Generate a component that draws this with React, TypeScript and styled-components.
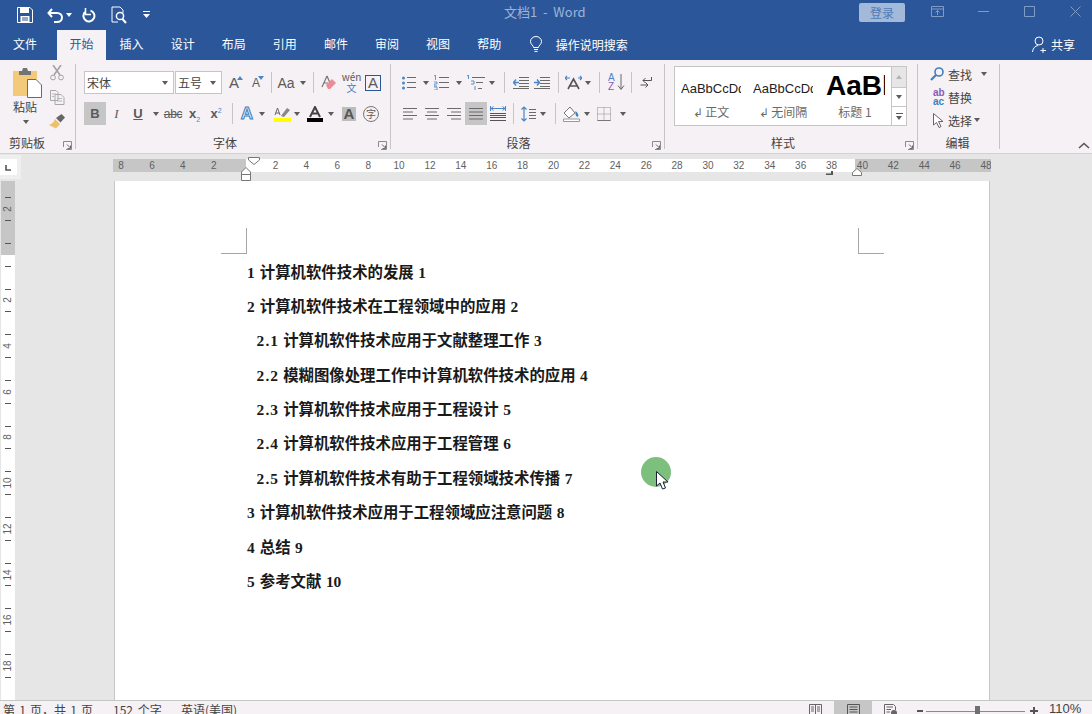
import React from 'react';
import styled, { createGlobalStyle } from 'styled-components';

const Global = createGlobalStyle`
  html, body { margin: 0; padding: 0; height: 100%; overflow: hidden; background: #e6e6e6; }
  #root { height: 100%; }
  * { box-sizing: border-box; }
`;
const UI = `"Noto Sans CJK SC", "Liberation Sans", sans-serif`;
const Latin = `"Liberation Sans", "Noto Sans CJK SC", sans-serif`;

const Shell = styled.div`
  position: relative; width: 1092px; height: 714px; overflow: hidden;
  display: flex; flex-direction: column; font-family: ${UI}; font-size: 12px; color: #444; background: #e6e6e6;
`;
const TitleBar = styled.header`
  height: 30px; flex: none; background: #2b579a; display: flex; align-items: center; position: relative;
`;
const Qat = styled.div`display: flex; align-items: center; padding-left: 15px;`;
const QatSlot = styled.span<{ $w: number }>`width: ${p => p.$w}px; flex: none; display: flex; justify-content: center; align-items: center;`;
const TitleText = styled.div`
  position: absolute; left: 504px; top: 3px; color: #9db4d6; font-size: 13px; line-height: 18px; white-space: pre; font-family: ${UI};
`;
const TitleRight = styled.div`margin-left: auto; margin-right: -6px; display: flex; align-items: center; height: 30px;`;
const Login = styled.button`
  width: 46px; height: 19px; margin: -6px 9px 0 0; border: 0; border-radius: 2px; background: #a2b9d9; color: #4f7bb3;
  font: 12px/19px ${UI}; padding: 0;
`;
const WinBtn = styled.span`width: 46px; height: 22px; margin-top: -8px; display: flex; align-items: center; justify-content: center;`;

const TabBar = styled.nav`height: 30px; flex: none; background: #2b579a; display: flex; align-items: stretch;`;
const Tab = styled.div<{ $active?: boolean; $w?: number; $mr?: number }>`
  width: ${p => p.$w ?? 51.1}px; margin-right: ${p => p.$mr ?? 0}px; display: flex; align-items: center; justify-content: center; padding-bottom: 3px;
  color: ${p => (p.$active ? '#2b579a' : '#fff')}; background: ${p => (p.$active ? '#f5f1f5' : 'transparent')};
`;
const Tell = styled.div`display: flex; align-items: center; color: #fff; padding: 0 0 1px 14px; gap: 13px;`;
const Share = styled.div`margin-left: auto; display: flex; align-items: center; color: #fff; gap: 4px; padding: 0 17px 1px 0;`;

const Ribbon = styled.section`height: 93px; flex: none; background: #f5f1f5; display: flex; position: relative;`;
const Group = styled.div<{ $w: number }>`
  width: ${p => p.$w}px; flex: none; position: relative; display: flex; flex-direction: column; margin-top: 4px; height: 85px;
  border-right: 1px solid #c6c6c6;
`;
const GroupBody = styled.div<{ $pl: number }>`
  padding: 7px 0 0 ${p => p.$pl}px; display: flex; flex-direction: column; gap: 8px;
`;
const GroupLabel = styled.div<{ $pr?: number; $left?: number }>`
  margin-top: auto; margin-bottom: -3px; height: 18px; line-height: 18px; color: #444;
  text-align: ${p => (p.$left ? 'left' : 'center')}; padding: 0 ${p => p.$pr ?? 0}px 0 ${p => p.$left ?? 0}px;
`;
const Launcher = styled.span`position: absolute; right: 3px; bottom: -1px; display: flex;`;
const Row = styled.div`display: flex; align-items: center; height: 23px;`;
const Slot = styled.span<{ $w?: number; $ml?: number; $on?: boolean }>`
  width: ${p => p.$w ?? 22}px; margin-left: ${p => p.$ml ?? 0}px; height: 23px; flex: none; display: flex; align-items: center; justify-content: center; position: relative;
  background: ${p => (p.$on ? '#c6c6c6' : 'transparent')};
`;
const Caret = styled.i`width: 0; height: 0; border-left: 3.5px solid transparent; border-right: 3.5px solid transparent; border-top: 4px solid #5c5c5c; display: block;`;
const Sep = styled.i`display: block; width: 1px; height: 21px; background: #c6c6c6;`;
const Combo = styled.div<{ $w: number; $mr?: number }>`
  width: ${p => p.$w}px; margin-right: ${p => p.$mr ?? 0}px; height: 23px; background: #fff; border: 1px solid #c6c6c6; display: flex; align-items: center; justify-content: space-between;
  padding: 0 5px 0 2px; font-size: 12px; color: #444;
`;
const Glyph = styled.span<{ $s?: number; $w?: number; $i?: boolean; $c?: string; $u?: boolean; $ff?: string }>`
  font-family: ${p => p.$ff ?? Latin}; font-size: ${p => p.$s ?? 13}px; font-weight: ${p => p.$w ?? 400}; font-style: ${p => (p.$i ? 'italic' : 'normal')};
  color: ${p => p.$c ?? '#5a5a5a'}; text-decoration: ${p => (p.$u ? 'underline' : 'none')}; line-height: 1; white-space: nowrap;
  sub, sup { font-size: 7px; color: #4a86c5; font-weight: 400; line-height: 0; }
`;
const Strike = styled(Glyph)`text-decoration: line-through; letter-spacing: -0.3px;`;
const WenStack = styled(Glyph)`display: flex; flex-direction: column; align-items: center; gap: 1px; line-height: 10px; font-size: 10px;`;
const WenHan = styled.span`color: #3f7fc0; font-size: 10px;`;
const BoxedA = styled(Glyph)`border: 1px solid #2b579a; width: 16px; height: 16px; display: flex; align-items: center; justify-content: center;`;
const OutlineA = styled(Glyph)`-webkit-text-stroke: 1px #3f7fc0; font-size: 17px;`;
const ShadedA = styled(Glyph)`background: #bdbdbd; width: 14px; height: 14px; display: flex; align-items: center; justify-content: center;`;
const CircledHan = styled(Glyph)`border: 1px solid #777; border-radius: 50%; width: 16px; height: 16px; display: flex; align-items: center; justify-content: center;`;
const GrowCaret = styled(Caret)<{ $up?: boolean }>`
  position: absolute; right: ${p => (p.$up ? 2 : 3)}px; top: 5px; border-top-color: #4a86c5; transform: ${p => (p.$up ? 'rotate(180deg)' : 'none')};
`;
const WhiteCaret = styled(Caret)`border-top-color: #fff;`;
const DisabledCaret = styled(Caret)`border-top-color: #b5b5b5; transform: rotate(180deg);`;
const MoreBar = styled.i`display: block; width: 7px; height: 1px; background: #5c5c5c;`;

const Clip = styled.div`display: flex; height: 66px;`;
const PasteCol = styled.div`width: 47px; padding: 3px 0 0 13px; display: flex; flex-direction: column;`;
const PasteLabel = styled.div`font-size: 12px; line-height: 16px; margin: 1px 0 0 0; color: #444;`;
const PasteCaret = styled.div`padding: 5px 0 0 10px;`;
const ClipCol = styled.div`width: 20px; display: flex; flex-direction: column; align-items: center; gap: 6px;`;
const ClipCell = styled.span`height: 18px; display: flex; align-items: center; justify-content: center;`;

const Gallery = styled.div`
  margin: 2px 0 0 9px; width: 233px; height: 60px; flex: none; border: 1px solid #c6c6c6; background: #fff; display: flex;
`;
const StyleItem = styled.div<{ $w: number }>`width: ${p => p.$w}px; padding-left: 6px; display: flex; flex-direction: column; flex: none;`;
const Sample = styled.div<{ $bold?: boolean }>`
  height: 38px; width: 60px; overflow: hidden; white-space: nowrap; display: flex; align-items: center;
  font-family: ${Latin}; font-size: ${p => (p.$bold ? 28 : 13)}px; font-weight: ${p => (p.$bold ? 700 : 400)}; color: ${p => (p.$bold ? '#000' : '#222')};
  padding: ${p => (p.$bold ? '0 0 0 1px' : '5px 0 0 0')};
`;
const SampleName = styled.div`text-align: center; width: 60px; font-size: 12px; line-height: 14px; color: #6a6a6a; white-space: pre;`;
const Scroll = styled.div`margin-left: auto; width: 15px; display: flex; flex-direction: column; border-left: 1px solid #c6c6c6;`;
const ScrollBtn = styled.div<{ $off?: boolean; $h: number }>`
  height: ${p => p.$h}px; display: flex; align-items: center; justify-content: center; flex-direction: column; gap: 2px;
  background: ${p => (p.$off ? '#e6e6e6' : '#fff')}; border-bottom: 1px solid #c6c6c6;
  &:last-child { border-bottom: 0; }
`;
const EditCol = styled.div`display: flex; flex-direction: column; gap: 3px; padding: 0 0 0 11px; height: 66px;`;
const EditRow = styled.div`display: flex; align-items: center; height: 20px; color: #444;`;
const EditIcon = styled.span<{ $pl: number }>`width: 18px; padding-left: ${p => p.$pl}px; display: flex;`;
const EditText = styled.span<{ $mr: number }>`margin-left: 1px; margin-right: ${p => p.$mr}px;`;
const AbStack = styled(Glyph)`display: flex; flex-direction: column; line-height: 9px; font-size: 10px; font-weight: 700;`;
const AbTop = styled.span`color: #8a5bb5; margin-left: 4px;`;
const AbBottom = styled.span`color: #3f7fc0; margin-left: 4px;`;
const Collapse = styled.span`position: absolute; right: 2px; bottom: 4px; display: flex;`;

const RulerRow = styled.div`height: 28px; flex: none; position: relative; border-top: 1px solid #d2d2d2; background: #e6e6e6; display: flex;`;
const TabBoxOuter = styled.div`width: 21px; height: 24px; margin-top: 1px; background: #efefef; padding: 4px 4px 4px 0;`;
const TabBoxInner = styled.div`height: 16px; background: #fff; display: flex; align-items: center; padding: 2px 0 0 5px;`;
const HRuler = styled.div`
  margin: 5px 0 0 92px; width: 878px; height: 13px; overflow: hidden; display: flex;
  background: linear-gradient(90deg, #c6c6c6 0 133px, #fff 133px 742px, #c6c6c6 742px);
`;
const HTrack = styled.div`display: flex; flex: none; margin-left: -7.4px;`;
const HCell = styled.span`
  width: 30.9px; flex: none; text-align: center; font: 10px/13px ${Latin}; color: #5f5f5f;
`;
const Marker = styled.span<{ $x: number; $y: number }>`position: absolute; left: ${p => p.$x}px; top: ${p => p.$y}px; display: flex;`;

const DocArea = styled.main`flex: 1; display: flex; min-height: 0; background: #e6e6e6;`;
const VRuler = styled.div`
  width: 14px; margin-left: 1px; flex: none; overflow: hidden; padding-top: 5.2px;
  background: linear-gradient(180deg, #c6c6c6 0 74px, #fff 74px);
`;
const VCell = styled.div`
  height: 45.7px; display: flex; flex-direction: column; align-items: center; justify-content: center; gap: 5.9px;
`;
const VDash = styled.i`display: block; width: 6px; height: 1px; background: #555; flex: none;`;
const VNum = styled.span`
  height: 10px; display: flex; align-items: center; justify-content: center; transform: rotate(-90deg); font: 10px/10px ${Latin}; color: #5f5f5f; white-space: nowrap; flex: none;
`;
const Page = styled.article`
  margin-left: 99px; width: 876px; background: #fff; border-left: 1px solid #c6c6c6; border-right: 1px solid #c6c6c6; padding: 47px 105px 0 106px; flex: none;
`;
const Marks = styled.div`display: flex; justify-content: space-between;`;
const Mark = styled.i<{ $side: 'left' | 'right' }>`
  display: block; width: 26px; height: 26px; border-bottom: 1px solid #a6a6a6;
  border-${p => p.$side}: 1px solid #a6a6a6;
`;
const Toc = styled.div`padding: 1.5px 0 0 26px;`;
const TocLine = styled.p<{ $sub?: boolean }>`
  margin: 0; height: 34.4px; line-height: 34.4px; white-space: nowrap; padding-left: ${p => (p.$sub ? 9.6 : 0)}px;
  font-family: "Liberation Serif", "Noto Sans CJK SC", serif; font-size: 15.4px; font-weight: 700; color: #1a1a1a;
`;
const TocNum = styled.span`margin-right: 4px; letter-spacing: 1.1px;`;
const TocEnd = styled.span`margin-left: 4.5px;`;

const Status = styled.footer`
  height: 14px; flex: none; background: #f5f1f5; border-top: 1px solid #c6c6c6; display: flex; align-items: flex-start; position: relative; overflow: hidden; color: #444;
`;
const StatusText = styled.span<{ $w: number; $pl?: number; $ws?: number }>`
  width: ${p => p.$w}px; padding-left: ${p => p.$pl ?? 0}px; word-spacing: ${p => p.$ws ?? 0}px; flex: none; font-size: 12px; line-height: 16px; margin-top: 1px; white-space: pre;
`;
const StatusRight = styled.div`margin-left: auto; display: flex; align-items: flex-start; height: 13px; padding-right: 11px;`;
const ViewBtn = styled.span<{ $on?: boolean }>`
  width: 38px; height: 13px; display: flex; justify-content: center; padding-top: 3px; background: ${p => (p.$on ? '#c6c6c6' : 'transparent')};
`;
const Zoom = styled.div`margin-left: 7px; display: flex; align-items: center; height: 13px; padding-top: 7px;`;
const ZoomTrack = styled.div`position: relative; width: 99px; height: 1px; background: #8a8a8a; margin: 0 5px 0 3px;`;
const ZoomThumb = styled.i`position: absolute; left: 49px; top: -5px; width: 5px; height: 11px; background: #707070;`;
const ZoomSign = styled.span`width: 6px; height: 2px; background: #555; position: relative; flex: none;`;
const ZoomPlus = styled(ZoomSign)`width: 8px; &::after { content: ''; position: absolute; left: 3px; top: -3px; width: 2px; height: 8px; background: #555; }`;
const Pct = styled.span`width: 43px; padding-left: 11px; font: 13px/16px ${Latin}; color: #444;`;

const Pointer = styled.div`position: absolute; left: 641px; top: 457px; width: 30px; height: 36px;`;
const Dot = styled.i`display: block; width: 30px; height: 30px; border-radius: 50%; background: #7dbf7d;`;
const Arrow = styled.span`position: absolute; left: 15px; top: 14px; display: flex;`;

const S = ({ w, h, children }: { w: number; h: number; children: React.ReactNode }) => (
  <svg width={w} height={h} viewBox={`0 0 ${w} ${h}`} fill="none">{children}</svg>
);

const lines = (x1: number, x2: number, ys: number[], c = '#6a6a6a') => ys.map(y => <path key={y} d={`M${x1} ${y}.5H${x2}`} stroke={c} />);

const LaunchIcon = () => (
  <S w={9} h={9}><path d="M.5 6V.5H8.5V8.5H3" stroke="#8a8a8a" /><path d="M4 3.5 7.5 7M7.5 4.5V7.5H4.5" stroke="#6a6a6a" /></S>
);

const AlignIcon = ({ kind }: { kind: 'l' | 'c' | 'r' | 'j' }) => {
  const xs = {
    l: [[0, 14], [0, 10], [0, 14], [0, 10]], c: [[0, 14], [2, 12], [0, 14], [2, 12]], r: [[0, 14], [4, 14], [0, 14], [4, 14]], j: [[0, 14], [0, 14], [0, 14], [0, 14]],
  }[kind];
  return <S w={14} h={12}>{xs.map((a, i) => <path key={i} d={`M${a[0]} ${i * 3.5 + .5}H${a[1]}`} stroke="#6a6a6a" />)}</S>;
};

const tabs = ['插入', '设计', '布局', '引用', '邮件', '审阅', '视图', '帮助'];
const hnums = ['8', '6', '4', '2', '', ...Array.from({ length: 24 }, (_, i) => String((i + 1) * 2))];
const vnums = ['2', '', '2', '4', '6', '8', '10', '12', '14', '16', '18'];
const toc = [
  { n: '1', t: '计算机软件技术的发展', e: '1' },
  { n: '2', t: '计算机软件技术在工程领域中的应用', e: '2' },
  { n: '2.1', t: '计算机软件技术应用于文献整理工作', e: '3', sub: true },
  { n: '2.2', t: '模糊图像处理工作中计算机软件技术的应用', e: '4', sub: true },
  { n: '2.3', t: '计算机软件技术应用于工程设计', e: '5', sub: true },
  { n: '2.4', t: '计算机软件技术应用于工程管理', e: '6', sub: true },
  { n: '2.5', t: '计算机软件技术有助于工程领域技术传播', e: '7', sub: true },
  { n: '3', t: '计算机软件技术应用于工程领域应注意问题', e: '8' },
  { n: '4', t: '总结', e: '9' },
  { n: '5', t: '参考文献', e: '10' },
];

export default function App() {
  return (
    <Shell>
      <Global />
      <TitleBar>
        <Qat>
          <QatSlot $w={19}><S w={16} h={16}><path d="M.5.5H13L15.5 3V15.5H.5Z" stroke="#fff" /><path d="M3 1H12V6H3ZM3.5 9H12.5V15H3.5Z" fill="#fff" /><path d="M5 11H11M5 13H11" stroke="#2b579a" /></S></QatSlot>
          <QatSlot $w={13} />
          <QatSlot $w={17}><S w={17} h={15}><path d="M5 1 1.5 5 5 9" stroke="#fff" strokeWidth="2" /><path d="M2 5H10C13 5 15 7 15 9.5S13 14 10 14H7" stroke="#fff" strokeWidth="2" /></S></QatSlot>
          <QatSlot $w={10}><WhiteCaret /></QatSlot>
          <QatSlot $w={6.5} />
          <QatSlot $w={16}><S w={14} h={15}><path d="M8.5 2.6A5.5 5.5 0 1 1 3 4" stroke="#fff" strokeWidth="2" /><path d="M3.5 0V6.5H9" stroke="#fff" strokeWidth="1.5" /></S></QatSlot>
          <QatSlot $w={14.5} />
          <QatSlot $w={16}><S w={16} h={18}><path d="M9 1H1V16H7M9 1 12 4V7" stroke="#fff" /><circle cx="9" cy="10" r="3.6" stroke="#fff" strokeWidth="1.5" /><path d="M11.5 13 15 17" stroke="#fff" strokeWidth="2" /></S></QatSlot>
          <QatSlot $w={14} />
          <QatSlot $w={10}><S w={7} h={8}><path d="M0 .5H7" stroke="#fff" /><path d="M0 3H7L3.5 7Z" fill="#fff" /></S></QatSlot>
        </Qat>
        <TitleText>文档1  -  Word</TitleText>
        <TitleRight>
          <Login>登录</Login>
          <WinBtn><S w={13} h={11}><path d="M.5.5H12.5V10.5H.5ZM.5 3H12.5M6.5 9V4.5M4.5 6.5 6.5 4.5 8.5 6.5" stroke="#7f9cc6" /></S></WinBtn>
          <WinBtn><S w={11} h={1}><path d="M0 .5H11" stroke="#7f9cc6" /></S></WinBtn>
          <WinBtn><S w={11} h={11}><path d="M.5.5H10.5V10.5H.5Z" stroke="#7f9cc6" /></S></WinBtn>
          <WinBtn><S w={11} h={11}><path d="M.5.5 10.5 10.5M10.5.5.5 10.5" stroke="#7f9cc6" /></S></WinBtn>
        </TitleRight>
      </TitleBar>

      <TabBar>
        <Tab $w={50} $mr={7}>文件</Tab>
        <Tab $active $w={49}>开始</Tab>
        {tabs.map(t => <Tab key={t}>{t}</Tab>)}
        <Tell>
          <S w={14} h={17}><path d="M4.5 11.5C4.5 9.5 1.5 8.5 1.5 5.5A5.5 5 0 0 1 12.5 5.5C12.5 8.5 9.5 9.5 9.5 11.5ZM5 13.5H9M5.5 15.5H8.5" stroke="#fff" /></S>
          <span>操作说明搜索</span>
        </Tell>
        <Share>
          <S w={15} h={17}><circle cx="7" cy="5" r="4" stroke="#fff" /><path d="M.5 16C1 12 3 10 6 9.5M11 12V17M8.5 14.5H14" stroke="#fff" /></S>
          <span>共享</span>
        </Share>
      </TabBar>

      <Ribbon>
        <Group $w={76}>
          <Clip>
            <PasteCol>
              <S w={29} h={31}>
                <path d="M0 4H24V29H0Z" fill="#f2ca7a" />
                <path d="M6 4H9L10 1H14L15 4H18V8H6Z" fill="#737373" />
                <path d="M14.5 12.5H23L28.5 18V30.5H14.5Z" fill="#fff" stroke="#6a6a6a" />
              </S>
              <PasteLabel>粘贴</PasteLabel>
              <PasteCaret><Caret /></PasteCaret>
            </PasteCol>
            <ClipCol>
              <ClipCell><S w={14} h={16}><path d="M3 0 10 10M11 0 4 10" stroke="#a3a3a3" strokeWidth="1.6" /><circle cx="3" cy="12.5" r="2.4" stroke="#a3a3a3" /><circle cx="11" cy="12.5" r="2.4" stroke="#a3a3a3" /></S></ClipCell>
              <ClipCell><S w={15} h={15}><path d="M.5.5H6L8 2.5V10.5H.5ZM5 4.5H11L14 7.5V14.5H5Z" fill="#f5f1f5" stroke="#a8a8a8" /><path d="M2 4H6M2 6.5H4M7 8.5H12M7 11H12" stroke="#b8b8b8" /></S></ClipCell>
              <ClipCell><S w={16} h={15}><path d="M6 5 11 10 7 14.5 0 11C3 10 5 8 6 5Z" fill="#f0c068" /><path d="M7 4 11.500 8.500 16 3.500 12.500 0Z" fill="#666" /></S></ClipCell>
            </ClipCol>
          </Clip>
          <GroupLabel $left={9}>剪贴板</GroupLabel>
          <Launcher><LaunchIcon /></Launcher>
        </Group>

        <Group $w={315}>
          <GroupBody $pl={8}>
            <Row>
              <Combo $w={90} $mr={1}><span>宋体</span><Caret /></Combo>
              <Combo $w={47}><span>五号</span><Caret /></Combo>
              <Slot $ml={1}><Glyph $s={15}>A</Glyph><GrowCaret $up /></Slot>
              <Slot><Glyph $s={12}>A</Glyph><GrowCaret /></Slot>
              <Slot $w={8}><Sep /></Slot>
              <Slot $w={22}><Glyph $s={14}>Aa</Glyph></Slot>
              <Slot $w={12}><Caret /></Slot>
              <Slot $w={8}><Sep /></Slot>
              <Slot $w={24}><S w={16} h={16}><path d="M6 1 1 12M6 1 9 8M3 8H7" stroke="#777" strokeWidth="1.2" /><path d="M5 10 11 4 15 8 9 14H7Z" fill="#ee8a97" /></S></Slot>
              <Slot $w={21}><WenStack $ff={UI}>wén<WenHan>文</WenHan></WenStack></Slot>
              <Slot $w={22}><BoxedA $s={15}>A</BoxedA></Slot>
            </Row>
            <Row>
              <Slot $on><Glyph $s={13} $w={700}>B</Glyph></Slot>
              <Slot $w={21}><Glyph $s={13} $i $ff={`"Liberation Serif", serif`}>I</Glyph></Slot>
              <Slot $w={22}><Glyph $s={13} $w={700} $u>U</Glyph></Slot>
              <Slot $w={13}><Caret /></Slot>
              <Slot><Strike $s={12}>abc</Strike></Slot>
              <Slot $w={21}><Glyph $s={13} $w={700}>x<sub>2</sub></Glyph></Slot>
              <Slot><Glyph $s={13} $w={700}>x<sup>2</sup></Glyph></Slot>
              <Slot $w={10}><Sep /></Slot>
              <Slot $w={20}><OutlineA $w={700} $c="#d9e8f7">A</OutlineA></Slot>
              <Slot $w={10}><Caret /></Slot>
              <Slot $w={20} $ml={5}><S w={17} h={16}><path d="M1 9 3.500 2 6 9M2 7H5" stroke="#666" /><path d="M7 10 13 2 16 4 10 11Z" fill="#888" /><path d="M0 12H17V16H0Z" fill="#ffff00" /></S></Slot>
              <Slot $w={10}><Caret /></Slot>
              <Slot $w={20} $ml={3}><S w={16} h={16}><path d="M3 11 8 1 13 11M5 7.500H11" stroke="#444" strokeWidth="2" /><path d="M0 12H16V16H0Z" fill="#000" /></S></Slot>
              <Slot $w={10} $ml={1}><Caret /></Slot>
              <Slot $ml={2}><ShadedA $s={15} $w={700} $c="#555">A</ShadedA></Slot>
              <Slot><CircledHan $s={10} $ff={UI}>字</CircledHan></Slot>
            </Row>
          </GroupBody>
          <GroupLabel $pr={16}>字体</GroupLabel>
          <Launcher><LaunchIcon /></Launcher>
        </Group>

        <Group $w={274}>
          <GroupBody $pl={7}>
            <Row>
              <Slot $w={22}><S w={14} h={14}><circle cx="1.500" cy="2" r="1.500" fill="#4a86c5" /><circle cx="1.500" cy="7" r="1.500" fill="#4a86c5" /><circle cx="1.500" cy="12" r="1.500" fill="#4a86c5" />{lines(5, 14, [1, 6, 11])}</S></Slot>
              <Slot $w={12}><Caret /></Slot>
              <Slot $w={21} $ml={-1}><S w={15} h={15}><path d="M0 1 1.500 0V5M0 7H3V9H0V11H3M0 12H3V15H0" stroke="#4a86c5" strokeWidth=".8" />{lines(5, 15, [2, 7, 12])}</S></Slot>
              <Slot $w={12} $ml={1}><Caret /></Slot>
              <Slot $w={22}><S w={18} h={15}><path d="M0 1 1.500 0V4M4 6H7V9H4M8 11V15" stroke="#4a86c5" strokeWidth=".9" />{lines(5, 18, [2])}{lines(9, 16, [7])}{lines(11, 15, [13])}</S></Slot>
              <Slot $w={10}><Caret /></Slot>
              <Slot $w={14}><Sep /></Slot>
              <Slot $w={19}><S w={16} h={12}>{lines(6, 16, [0, 3, 6, 9])}{lines(0, 16, [11])}<path d="M0 5.500H6M3 2.500 .5 5.500 3 8.500" stroke="#4a86c5" strokeWidth="1.400" /></S></Slot>
              <Slot $w={24}><S w={16} h={12}>{lines(6, 16, [0, 3, 6, 9])}{lines(0, 16, [11])}<path d="M0 5.500H6M3 2.500 5.500 5.500 3 8.500" stroke="#4a86c5" strokeWidth="1.400" /></S></Slot>
              <Slot $w={8}><Sep /></Slot>
              <Slot $w={22}><S w={17} h={15}><path d="M3 14 8.500 4 14 14M5 11H12" stroke="#555" strokeWidth="1.600" /><path d="M0 3H5M13 3H17M2 1 0 3 2 5M15 1 17 3 15 5" stroke="#4a86c5" strokeWidth="1.200" /></S></Slot>
              <Slot $w={8}><Caret /></Slot>
              <Slot $w={14}><Sep /></Slot>
              <Slot $w={20}><S w={17} h={19}><text x="0" y="8" fontSize="10" fontFamily="Liberation Sans" fill="#4a86c5">A</text><text x="0" y="17" fontSize="10" fontFamily="Liberation Sans" fill="#8a5bb5">Z</text><path d="M13 1V16M10 12.500 13 16.500 16 12.500" stroke="#666" /></S></Slot>
              <Slot $w={10}><Sep /></Slot>
              <Slot $w={20}><S w={12} h={13}><path d="M11.500 1V4.500H3M5.500 2 3 4.500 5.500 7" stroke="#555" /><path d="M.5 9H8M5.500 6.500 8 9 5.500 11.500" stroke="#555" /></S></Slot>
            </Row>
            <Row>
              <Slot $ml={1}><AlignIcon kind="l" /></Slot>
              <Slot><AlignIcon kind="c" /></Slot>
              <Slot><AlignIcon kind="r" /></Slot>
              <Slot $on><AlignIcon kind="j" /></Slot>
              <Slot><S w={16} h={15}><path d="M.5 0V5M15.500 0V5M1 2.500H15M3.500.5 1 2.500 3.500 4.500M12.500.5 15 2.500 12.500 4.500" stroke="#4a86c5" />{lines(0, 16, [7, 9, 11, 14], '#555')}</S></Slot>
              <Slot $w={8}><Sep /></Slot>
              <Slot><S w={15} h={16}><path d="M3 1V15M.5 3.500 3 1 5.500 3.500M.5 12.500 3 15 5.500 12.500" stroke="#4a86c5" strokeWidth="1.200" />{lines(8, 15, [3, 6, 9, 12])}</S></Slot>
              <Slot $w={10} $ml={-1}><Caret /></Slot>
              <Slot $w={8} $ml={3}><Sep /></Slot>
              <Slot $ml={1}><S w={17} h={16}><path d="M7 1 12 7 6 12 1 7Z" fill="#fff" stroke="#777" /><path d="M12.500 5C15 7 16 9 15 10.500 13.500 11.500 12 9 12.500 5Z" fill="#3f7fc0" /><path d="M.5 13H16.500V15.500H.5Z" fill="#fff" stroke="#999" /></S></Slot>
              <Slot $w={10}><Caret /></Slot>
              <Slot $ml={1}><S w={14} h={14}><path d="M.5.5H13.500V13.500H.5ZM7 .5V13.500M.5 7H13.500" stroke="#8a8a8a" strokeDasharray="1 1" /><path d="M.5 13.500H13.500" stroke="#777" /></S></Slot>
              <Slot $w={10} $ml={3}><Caret /></Slot>
            </Row>
          </GroupBody>
          <GroupLabel $pr={18}>段落</GroupLabel>
          <Launcher><LaunchIcon /></Launcher>
        </Group>

        <Group $w={253}>
          <Gallery>
            <StyleItem $w={72}><Sample>AaBbCcDd</Sample><SampleName>↲ 正文</SampleName></StyleItem>
            <StyleItem $w={72}><Sample>AaBbCcDd</Sample><SampleName>↲ 无间隔</SampleName></StyleItem>
            <StyleItem $w={72}><Sample $bold>AaBl</Sample><SampleName>标题 1</SampleName></StyleItem>
            <Scroll>
              <ScrollBtn $off $h={21}><DisabledCaret /></ScrollBtn>
              <ScrollBtn $h={19}><Caret /></ScrollBtn>
              <ScrollBtn $h={18}><MoreBar /><Caret /></ScrollBtn>
            </Scroll>
          </Gallery>
          <GroupLabel $pr={16}>样式</GroupLabel>
          <Launcher><LaunchIcon /></Launcher>
        </Group>

        <Group $w={82}>
          <EditCol>
            <EditRow><EditIcon $pl={1}><S w={14} h={14}><circle cx="9" cy="5" r="4" stroke="#3f7fc0" strokeWidth="1.600" /><path d="M6 8 1 13" stroke="#3f7fc0" strokeWidth="2.200" /></S></EditIcon><EditText $mr={9}>查找</EditText><Caret /></EditRow>
            <EditRow><EditIcon $pl={0}><AbStack><AbTop>ab</AbTop><AbBottom>ac</AbBottom></AbStack></EditIcon><EditText $mr={7}>替换</EditText></EditRow>
            <EditRow><EditIcon $pl={4}><S w={11} h={15}><path d="M.5.5V12L3.500 9.500 6 14.500 8 13.500 5.500 8.500H10Z" fill="#fff" stroke="#666" /></S></EditIcon><EditText $mr={2}>选择</EditText><Caret /></EditRow>
          </EditCol>
          <GroupLabel $pr={2}>编辑</GroupLabel>
        </Group>
        <Collapse><S w={12} h={7}><path d="M1 6 6 1.500 11 6" stroke="#555" strokeWidth="1.600" /></S></Collapse>
      </Ribbon>

      <RulerRow>
        <TabBoxOuter><TabBoxInner><S w={6} h={6}><path d="M1 0V5H6" stroke="#555" strokeWidth="1.600" /></S></TabBoxInner></TabBoxOuter>
        <HRuler><HTrack>{hnums.map((n, i) => <HCell key={i}>{n}</HCell>)}</HTrack></HRuler>
        <Marker $x={248} $y={3}><S w={12} h={8}><path d="M.5.5H11.500V3L6 7.500.5 3Z" fill="#fff" stroke="#777" /></S></Marker>
        <Marker $x={241} $y={13}><S w={10} h={14}><path d="M.5 13.500V5L5 .5 9.500 5V13.500ZM.5 7.500H9.500" fill="#fff" stroke="#777" /></S></Marker>
        <Marker $x={826} $y={17}><S w={8} h={5}><path d="M5 0H7V4H0V2.500H5Z" fill="#555" /></S></Marker>
        <Marker $x={852} $y={14}><S w={10} h={8}><path d="M.5 7.500V4.500L5 .5 9.500 4.500V7.500Z" fill="#fff" stroke="#777" /></S></Marker>
      </RulerRow>

      <DocArea>
        <VRuler>
          {vnums.map((n, i) => <VCell key={i}><VDash /><VNum>{n}</VNum><VDash /></VCell>)}
        </VRuler>
        <Page>
          <Marks><Mark $side="right" /><Mark $side="left" /></Marks>
          <Toc>
            {toc.map(l => (
              <TocLine key={l.t} $sub={l.sub}><TocNum>{l.n}</TocNum>{l.t}<TocEnd>{l.e}</TocEnd></TocLine>
            ))}
          </Toc>
        </Page>
      </DocArea>

      <Status>
        <StatusText $w={113} $pl={3} $ws={1.5}>第 1 页，共 1 页</StatusText>
        <StatusText $w={68} $ws={2}>152 个字</StatusText>
        <StatusText $w={70}>英语(美国)</StatusText>
        <StatusRight>
          <ViewBtn><S w={13} h={11}><path d="M.5.5H12.500V11H.5ZM6.500 0V11M2 3H5M2 5H5M2 7H5M8 3H11M8 5H11M8 7H11" stroke="#666" /></S></ViewBtn>
          <ViewBtn $on><S w={13} h={11}><path d="M.5.5H12.500V11H.5ZM2.500 3H10.500M2.500 5.500H10.500M2.500 8H10.500" stroke="#555" /></S></ViewBtn>
          <ViewBtn><S w={14} h={11}><path d="M.5 11V.5H9.500L11.500 2.500V6M2.500 3H9M2.500 5.500H7M2.500 8H6" stroke="#666" /><circle cx="10" cy="9" r="3" fill="#666" /></S></ViewBtn>
          <Zoom><ZoomSign /><ZoomTrack><ZoomThumb /></ZoomTrack><ZoomPlus /></Zoom>
          <Pct>110%</Pct>
        </StatusRight>
      </Status>

      <Pointer>
        <Dot />
        <Arrow><S w={13} h={20}><path d="M.5.5V15L4 12 6.500 18 9.500 17 7 11H12Z" fill="#fff" stroke="#1a1f36" /></S></Arrow>
      </Pointer>
    </Shell>
  );
}
